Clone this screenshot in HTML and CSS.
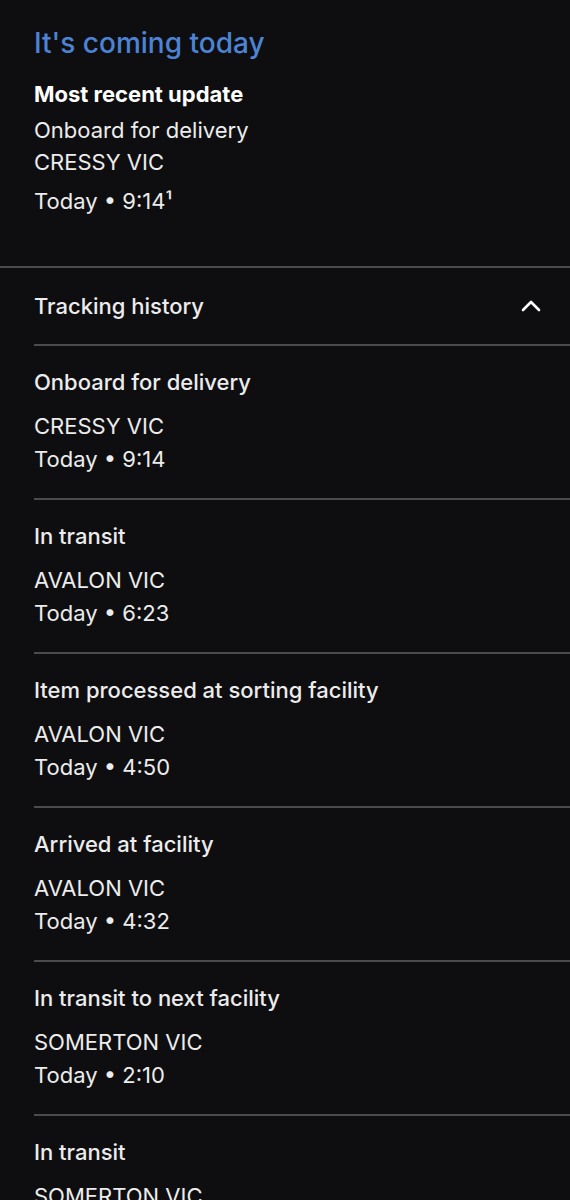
FILE: index.html
```html
<!DOCTYPE html>
<html lang="en">
<head>
  <meta charset="UTF-8" />
  <meta name="viewport" content="width=device-width, initial-scale=1.0" />
  <title>Tracking</title>
  <link rel="stylesheet" href="styles.css">
</head>
<body>
  <section class="summary">
    <h1 class="eta">It's coming today</h1>
    <h2 class="recent-label">Most recent update</h2>
    <p class="recent-status">Onboard for delivery</p>
    <p class="recent-place">CRESSY VIC</p>
    <p class="recent-time">Today • 9:14¹</p>
  </section>

  <section class="history">
    <div class="history-head">
      <span>Tracking history</span>
      <svg class="chevron" width="20" height="12" viewBox="0 0 20 12">
        <path d="M2 10 L10 2 L18 10" fill="none" stroke="#fff" stroke-width="2.6" stroke-linecap="round" stroke-linejoin="round"/>
      </svg>
    </div>

    <ul class="events">
      <li class="event">
        <div class="event-title">Onboard for delivery</div>
        <div class="event-place">CRESSY VIC</div>
        <div class="event-time">Today • 9:14</div>
      </li>
      <li class="event">
        <div class="event-title">In transit</div>
        <div class="event-place">AVALON VIC</div>
        <div class="event-time">Today • 6:23</div>
      </li>
      <li class="event">
        <div class="event-title">Item processed at sorting facility</div>
        <div class="event-place">AVALON VIC</div>
        <div class="event-time">Today • 4:50</div>
      </li>
      <li class="event">
        <div class="event-title">Arrived at facility</div>
        <div class="event-place">AVALON VIC</div>
        <div class="event-time">Today • 4:32</div>
      </li>
      <li class="event">
        <div class="event-title">In transit to next facility</div>
        <div class="event-place">SOMERTON VIC</div>
        <div class="event-time">Today • 2:10</div>
      </li>
      <li class="event">
        <div class="event-title">In transit</div>
        <div class="event-place">SOMERTON VIC</div>
        <div class="event-time">Today • 1:58</div>
      </li>
    </ul>
  </section>
</body>
</html>
```

FILE: styles.css
```css
body {
  margin: 0;
  padding: 0;
  background: #0e0e10;
  color: #ececec;
  font-family: Inter, "Liberation Sans", sans-serif;
  font-size: 22px;
}

p, h1, h2 {
  margin: 0;
}

.summary {
  padding: 25px 34px 49px;
  border-bottom: 2px solid #4b4b4e;
}

.eta {
  font-size: 28px;
  font-weight: 500;
  line-height: 36px;
  color: #4d83d4;
  margin-bottom: 17px;
}

.recent-label {
  font-size: 22px;
  font-weight: 700;
  line-height: 32px;
  color: #fff;
  margin-bottom: 4px;
}

.recent-status,
.recent-place {
  line-height: 32px;
}

.recent-time {
  line-height: 32px;
  margin-top: 7px;
}

.history {
  padding-left: 34px;
}

.history-head {
  display: flex;
  justify-content: space-between;
  align-items: center;
  height: 76px;
  padding-right: 29px;
  font-weight: 500;
  border-bottom: 2px solid #4b4b4e;
}

.chevron {
  display: block;
}

.events {
  list-style: none;
  margin: 0;
  padding: 0;
}

.event {
  padding: 20px 0 22px;
  border-bottom: 2px solid #4b4b4e;
  line-height: 33px;
}

.event-title {
  font-weight: 500;
  margin-bottom: 11px;
}
```
